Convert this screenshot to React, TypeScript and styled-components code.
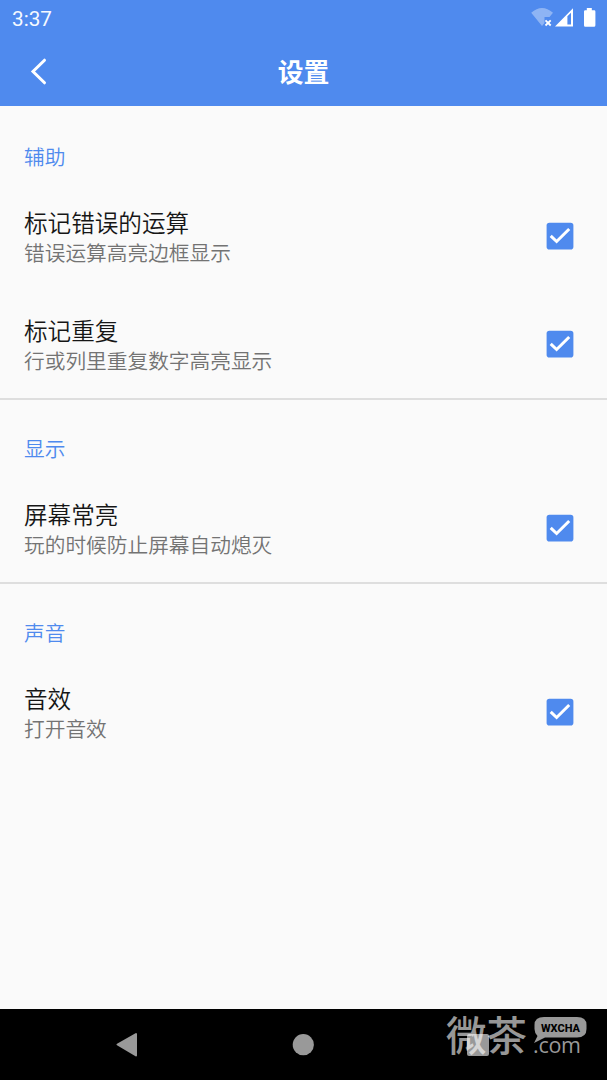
import React from "react";
import styled, { createGlobalStyle } from "styled-components";

const GlobalStyle = createGlobalStyle`
  * { box-sizing: border-box; }
  body { margin: 0; background: #fafafa; font-family: Roboto, "Noto Sans CJK SC", sans-serif; }
`;

const Screen = styled.div`
  display: flex;
  flex-direction: column;
  width: 607px;
  height: 1080px;
  overflow: hidden;
  background: #fafafa;
`;

const Header = styled.header`
  height: 106px;
  flex: none;
  background: #4f8aee;
  color: #fff;
`;

const StatusBar = styled.div`
  display: flex;
  justify-content: space-between;
  height: 36px;
  padding-left: 12px;
`;

const Clock = styled.span`
  font-size: 20.7px;
  line-height: 38px;
  color: #f6f9ff;
`;

const AppBar = styled.div`
  display: grid;
  grid-template-columns: 78px 1fr 78px;
  align-items: center;
  height: 70px;
`;

const BackButton = styled.button`
  display: flex;
  width: 78px;
  height: 70px;
  padding: 0;
  border: 0;
  background: none;
  color: inherit;
`;

const PageTitle = styled.h1`
  margin: 0;
  padding-top: 4px;
  font-size: 25.8px;
  font-weight: 700;
  line-height: 66px;
  text-align: center;
`;

const Settings = styled.main`
  flex: 1;
`;

const Section = styled.section`
  & + & { border-top: 2px solid #dedede; }
  & + & > h2 { height: 74px; padding-top: 34px; }
`;

const SectionTitle = styled.h2`
  height: 76px;
  margin: 0;
  padding: 36px 24px 0;
  font-size: 20.7px;
  font-weight: 350;
  line-height: 32px;
  color: #4f8aee;
`;

const Row = styled.label`
  display: flex;
  align-items: center;
  justify-content: space-between;
  height: 108px;
  padding: 0 33px 0 24px;
`;

const RowText = styled.div`
  padding-top: 3px;
  font-weight: 350;
`;

const RowTitle = styled.div`
  font-size: 23.6px;
  line-height: 32px;
  color: #161616;
`;

const RowSummary = styled.div`
  font-size: 20.7px;
  line-height: 28px;
  color: #737373;
`;

const NavBar = styled.nav`
  position: relative;
  flex: none;
  height: 71px;
  background: #000;
`;

const NavIcons = styled.div`
  display: grid;
  grid-template-columns: 22px 22px 22px;
  justify-content: space-between;
  align-items: center;
  height: 71px;
  padding: 0 118px 0 116px;
`;

const Watermark = styled.div`
  position: absolute;
  left: 446px;
  top: 0;
  width: 150px;
  height: 71px;
`;

const StatusIcons = () => (
  <svg width="97" height="36" viewBox="0 0 97 36">
    <path d="M21.2 12.7Q32 3.2 43 12.7L39.5 17H34.5V23L32 26Z" fill="#fff" fillOpacity=".36" />
    <path d="M35.5 20.3L40.7 25.5M40.7 20.3L35.5 25.5" stroke="#fff" strokeWidth="1.8" />
    <path fillRule="evenodd" d="M45 26.5L63 8.3V26.5ZM57.4 16.2V24.6H61V12.7Z" fill="#fff" />
    <path d="M76.8 8H81.8V10.2H84.2Q85.4 10.2 85.4 11.4V25.3Q85.4 26.8 84 26.8H75.3Q74 26.8 74 25.3V11.4Q74 10.2 75.2 10.2H76.8Z" fill="#fff" />
  </svg>
);

const Checkbox = () => (
  <svg width="28" height="28" viewBox="0 0 28 28">
    <rect x=".6" y=".8" width="26.8" height="26.8" rx="2.8" fill="#4f8aee" />
    <path d="M4.7 13.8L10.6 19.5L23.2 7" fill="none" stroke="#fff" strokeWidth="3" />
  </svg>
);

const Brand = () => (
  <Watermark>
    <svg width="150" height="71" viewBox="0 0 150 71">
      <text x="0" y="42" fontSize="40.5" fontWeight="500" fill="#fff" fillOpacity=".6" fontFamily="Noto Sans CJK SC, sans-serif">微茶</text>
      <path d="M98 8H131Q140.500 8 140.500 16V20Q140.500 28.500 131 28.500H99L88 34L91.500 27Q88.500 24 88.500 20V16Q88.500 8 98 8Z" fill="#999" />
      <text x="95" y="22.5" fontSize="11.8" fontWeight="800" fill="#000" textLength="39" lengthAdjust="spacingAndGlyphs" fontFamily="Roboto, sans-serif">WXCHA</text>
      <text x="87" y="43.8" fontSize="21.5" fill="#999" textLength="48" fontFamily="Open Sans, sans-serif">.com</text>
    </svg>
  </Watermark>
);

const sections = [
  { title: "辅助", rows: [["标记错误的运算", "错误运算高亮边框显示"], ["标记重复", "行或列里重复数字高亮显示"]] },
  { title: "显示", rows: [["屏幕常亮", "玩的时候防止屏幕自动熄灭"]] },
  { title: "声音", rows: [["音效", "打开音效"]] },
];

export default function App() {
  return (
    <Screen>
      <GlobalStyle />
      <Header>
        <StatusBar>
          <Clock>3:37</Clock>
          <StatusIcons />
        </StatusBar>
        <AppBar>
          <BackButton aria-label="返回">
            <svg width="78" height="70" viewBox="0 0 78 70">
              <path d="M44.5 24.2L33 35.5L44.5 46.8" fill="none" stroke="#fff" strokeWidth="3" strokeLinecap="round" />
            </svg>
          </BackButton>
          <PageTitle>设置</PageTitle>
        </AppBar>
      </Header>
      <Settings>
        {sections.map((section) => (
          <Section key={section.title}>
            <SectionTitle>{section.title}</SectionTitle>
            {section.rows.map(([title, summary]) => (
              <Row key={title}>
                <RowText>
                  <RowTitle>{title}</RowTitle>
                  <RowSummary>{summary}</RowSummary>
                </RowText>
                <Checkbox />
              </Row>
            ))}
          </Section>
        ))}
      </Settings>
      <NavBar>
        <NavIcons>
          <svg width="22" height="26" viewBox="0 0 22 26">
            <path d="M1.500 12.500L20 2V23.500Z" fill="#999" stroke="#999" strokeWidth="2" strokeLinejoin="round" />
          </svg>
          <svg width="22" height="22" viewBox="0 0 22 22">
            <circle cx="11.3" cy="10.7" r="10.6" fill="#999" />
          </svg>
          <svg width="22" height="22" viewBox="0 0 22 22">
            <rect width="22" height="22" rx="2" fill="#999" />
          </svg>
        </NavIcons>
        <Brand />
      </NavBar>
    </Screen>
  );
}
